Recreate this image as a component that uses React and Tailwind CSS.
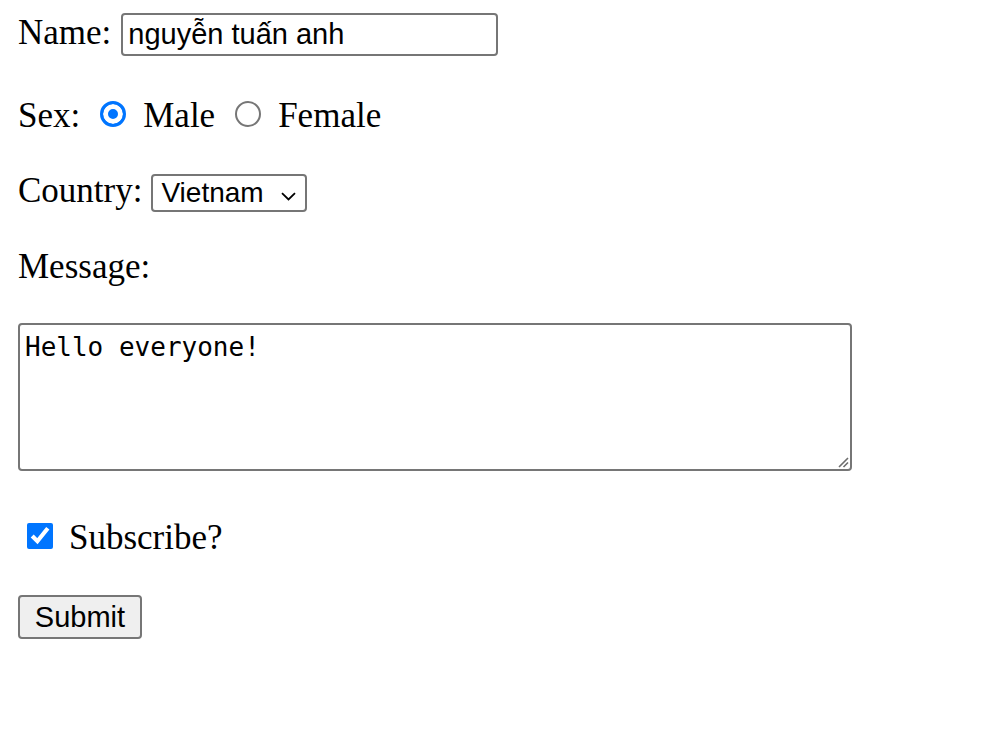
import React from 'react';

// Plain form, drawn at the size of a zoomed-in browser page

const Radio = ({ checked }) => (
    <input
        type="radio"
        name="sex"
        defaultChecked={checked}
        className="h-[26px] w-[26px] appearance-none rounded-full border-2 border-[#767676] bg-white checked:border-[3px] checked:border-[#0075ff] checked:bg-[#0075ff] checked:shadow-[inset_0_0_0_5px_#fff]"
    />
);

export default function App() {
    return (
        <form className="flex flex-col items-start bg-white pl-[18px] pb-[114px] font-['Liberation_Serif','Times_New_Roman',serif] text-[35px] leading-[35px] text-black">
            {/* Name */}
            <div className="mt-[13px] flex items-baseline">
                <label>Name:</label>
                <input
                    type="text"
                    defaultValue="nguyễn tuấn anh"
                    className="ml-[10px] h-[43px] w-[377px] rounded-[4px] border-2 border-[#767676] bg-white px-[5px] font-['Liberation_Sans',Arial,sans-serif] text-[29px] leading-[33px] text-black outline-none"
                />
            </div>

            {/* Sex */}
            <div className="mt-[42px] flex items-baseline gap-0">
                <span>Sex:</span>
                <span className="ml-[20px]"><Radio checked /></span>
                <span className="ml-[17px]">Male</span>
                <span className="ml-[20px]"><Radio /></span>
                <span className="ml-[17px]">Female</span>
            </div>

            {/* Country */}
            <div className="mt-[40px] flex items-baseline">
                <span>Country:</span>
                <div className="relative ml-[9px] flex">
                    <select
                        defaultValue="Vietnam"
                        className="h-[38px] w-[156px] appearance-none rounded-[4px] border-2 border-[#767676] bg-white pl-[8px] pr-[30px] font-['Liberation_Sans',Arial,sans-serif] text-[28px] leading-[32px] text-black outline-none"
                    >
                        <option>Vietnam</option>
                        <option>Japan</option>
                        <option>Korea</option>
                    </select>
                    <svg
                        className="pointer-events-none absolute right-[11px] top-[18px] h-[9px] w-[15px]"
                        viewBox="0 0 15 9"
                        fill="none"
                        stroke="#000"
                        strokeWidth="1.8"
                    >
                        <path d="M1 1.2l6.5 6.3L14 1.2" />
                    </svg>
                </div>
            </div>

            {/* Message */}
            <div className="mt-[37px]">Message:</div>

            <div className="relative mt-[39px]">
                <textarea
                    defaultValue="Hello everyone!"
                    className="block h-[148px] w-[834px] resize-none rounded-[4px] border-2 border-[#767676] bg-white pl-[5px] pt-[6px] font-['DejaVu_Sans_Mono',monospace] text-[26px] leading-[32px] text-black outline-none"
                />
                {/* resize grip */}
                <svg
                    className="pointer-events-none absolute bottom-[3px] right-[3px] h-[11px] w-[11px]"
                    viewBox="0 0 11 11"
                    fill="none"
                    stroke="#6e6e6e"
                    strokeWidth="1.6"
                >
                    <path d="M10 1L1 10M10 5.5L5.5 10" />
                </svg>
            </div>

            {/* Subscribe */}
            <div className="mt-[49px] flex items-baseline">
                <input type="checkbox" defaultChecked className="ml-[9px] h-[26px] w-[26px]" />
                <span className="ml-[16px]">Subscribe?</span>
            </div>

            <button
                type="button"
                className="mt-[40px] h-[44px] w-[124px] rounded-[4px] border-2 border-[#767676] bg-[#efefef] font-['Liberation_Sans',Arial,sans-serif] text-[29px] leading-[32px] text-black"
            >
                Submit
            </button>
        </form>
    );
}
